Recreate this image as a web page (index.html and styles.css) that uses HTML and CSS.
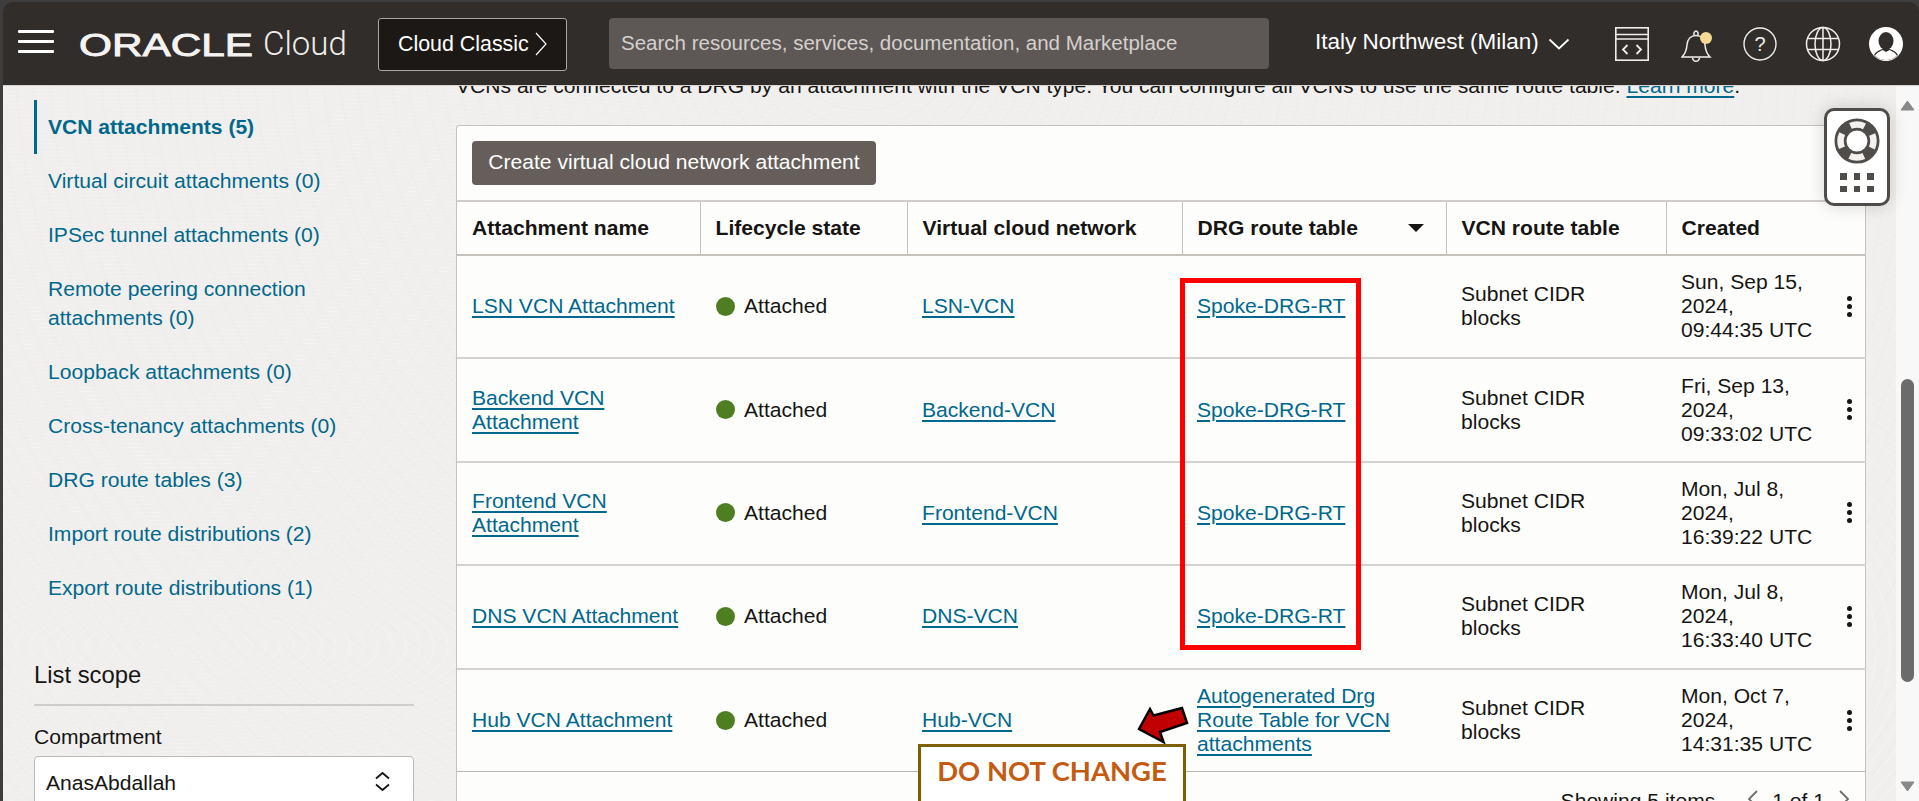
FILE: index.html
```html
<!DOCTYPE html>
<html lang="en">
<head>
<meta charset="utf-8">
<title>VCN attachments</title>
<link rel="stylesheet" href="styles.css">
</head>
<body>
<div class="app">
  <header class="topbar">
    <button class="burger" aria-label="Menu"><span></span><span></span><span></span></button>
    <div class="brand">
      <svg class="wordmark" width="174" height="24" viewBox="0 0 174 24"><text x="0" y="22.5" textLength="174" lengthAdjust="spacingAndGlyphs">ORACLE</text></svg>
      <span class="cloud">Cloud</span>
    </div>
    <button class="classic">Cloud Classic
      <svg width="14" height="28" viewBox="0 0 14 28"><path d="M2 3l10 11L2 25" fill="none" stroke="#fff" stroke-width="1.2"/></svg>
    </button>
    <div class="search">Search resources, services, documentation, and Marketplace</div>
    <div class="region">Italy Northwest (Milan)
      <svg width="22" height="12" viewBox="0 0 22 12"><path d="M1.5 1.5L11 10.5l9.5-9" fill="none" stroke="#fff" stroke-width="1.8"/></svg>
    </div>
    <div class="tools">
      <svg class="t-code" width="34" height="34" viewBox="0 0 34 34"><g fill="none" stroke="#f0efee" stroke-width="1.6"><rect x=".8" y=".8" width="32.4" height="32.4"/><path d="M1 7.5h32M1 12h32"/><path d="M12.5 18l-4.5 4.5 4.5 4.5M21.5 18l4.5 4.5-4.5 4.5" stroke-width="1.8"/></g></svg>
      <svg class="t-bell" width="32" height="36" viewBox="0 0 32 36"><g fill="none" stroke="#f0efee" stroke-width="1.5"><path d="M1 30c3-3 4.500-6 5-12 .4-6 4-9.500 9-9.500s8.600 3.500 9 9.500c.5 6 2 9 5 12z"/><path d="M13 8.500c-1-6 5-6 4 0"/><path d="M11.500 30.500c.5 5 6.500 5 7 0"/></g><circle cx="25" cy="11" r="6" fill="#f6d992"/></svg>
      <svg class="t-help" width="34" height="34" viewBox="0 0 34 34"><circle cx="17" cy="17" r="16" fill="none" stroke="#f0efee" stroke-width="1.4"/><text x="17" y="24" text-anchor="middle" class="qmark">?</text></svg>
      <svg class="t-globe" width="36" height="36" viewBox="0 0 36 36"><g fill="none" stroke="#f0efee" stroke-width="1.5"><circle cx="18" cy="18" r="16.500"/><ellipse cx="18" cy="18" rx="8" ry="16.500"/><path d="M18 1.500v33M2.500 12.500h31M2.500 23.500h31"/></g></svg>
      <svg class="t-user" width="34" height="34" viewBox="0 0 34 34"><circle cx="17" cy="17" r="17" fill="#fff"/><ellipse cx="17" cy="14" rx="7.500" ry="9" fill="#312d2a"/><path d="M5 28c3-5 7-5 8-6h8c1 1 5 1 8 6-3 3.500-7.500 5-12 5s-9-1.500-12-5z" fill="#312d2a"/><path d="M6 28.500c3-4 6-4.500 7.500-5.500l3.500 2 3.500-2c1.500 1 4.500 1.500 7.500 5.500-3 3-7 4.500-11 4.500s-8-1.500-11-4.500z" fill="#fff"/></svg>
    </div>
  </header>

  <div class="stage">
    <div class="content">
      <aside class="sidebar">
        <nav class="nav">
          <a class="nav-item active">VCN attachments (5)</a>
          <a class="nav-item">Virtual circuit attachments (0)</a>
          <a class="nav-item">IPSec tunnel attachments (0)</a>
          <a class="nav-item">Remote peering connection attachments (0)</a>
          <a class="nav-item">Loopback attachments (0)</a>
          <a class="nav-item">Cross-tenancy attachments (0)</a>
          <a class="nav-item">DRG route tables (3)</a>
          <a class="nav-item">Import route distributions (2)</a>
          <a class="nav-item">Export route distributions (1)</a>
        </nav>
        <h2 class="scope-title">List scope</h2>
        <label class="field-label">Compartment</label>
        <div class="select">AnasAbdallah
          <svg width="17" height="21" viewBox="0 0 17 21"><path d="M2 7.500L8.500 2 15 7.500M2 13.500L8.500 19 15 13.500" fill="none" stroke="#161513" stroke-width="1.800"/></svg>
        </div>
      </aside>

      <main class="main">
        <p class="intro">VCNs are connected to a DRG by an attachment with the VCN type. You can configure all VCNs to use the same route table. <a class="link">Learn more</a>.</p>
        <section class="card">
          <div class="toolbar"><button class="primary">Create virtual cloud network attachment</button></div>
          <table class="grid">
            <colgroup>
              <col class="c1"><col class="c2"><col class="c3"><col class="c4"><col class="c5"><col class="c6">
            </colgroup>
            <thead>
              <tr>
                <th>Attachment name</th>
                <th>Lifecycle state</th>
                <th>Virtual cloud network</th>
                <th><div class="sort">DRG route table<span class="caret"></span></div></th>
                <th>VCN route table</th>
                <th>Created</th>
              </tr>
            </thead>
            <tbody>
              <tr>
                <td><a class="link">LSN VCN Attachment</a></td>
                <td class="status"><div class="state"><i class="dot"></i>Attached</div></td>
                <td><a class="link">LSN-VCN</a></td>
                <td><a class="link">Spoke-DRG-RT</a></td>
                <td class="cidr">Subnet CIDR blocks</td>
                <td class="created"><div class="when"><span>Sun, Sep 15, 2024, 09:44:35 UTC</span><div class="kebab"><i></i><i></i><i></i></div></div></td>
              </tr>
              <tr>
                <td><a class="link">Backend VCN Attachment</a></td>
                <td class="status"><div class="state"><i class="dot"></i>Attached</div></td>
                <td><a class="link">Backend-VCN</a></td>
                <td><a class="link">Spoke-DRG-RT</a></td>
                <td class="cidr">Subnet CIDR blocks</td>
                <td class="created"><div class="when"><span>Fri, Sep 13, 2024, 09:33:02 UTC</span><div class="kebab"><i></i><i></i><i></i></div></div></td>
              </tr>
              <tr>
                <td><a class="link">Frontend VCN Attachment</a></td>
                <td class="status"><div class="state"><i class="dot"></i>Attached</div></td>
                <td><a class="link">Frontend-VCN</a></td>
                <td><a class="link">Spoke-DRG-RT</a></td>
                <td class="cidr">Subnet CIDR blocks</td>
                <td class="created"><div class="when"><span>Mon, Jul 8, 2024, 16:39:22 UTC</span><div class="kebab"><i></i><i></i><i></i></div></div></td>
              </tr>
              <tr>
                <td><a class="link">DNS VCN Attachment</a></td>
                <td class="status"><div class="state"><i class="dot"></i>Attached</div></td>
                <td><a class="link">DNS-VCN</a></td>
                <td><a class="link">Spoke-DRG-RT</a></td>
                <td class="cidr">Subnet CIDR blocks</td>
                <td class="created"><div class="when"><span>Mon, Jul 8, 2024, 16:33:40 UTC</span><div class="kebab"><i></i><i></i><i></i></div></div></td>
              </tr>
              <tr>
                <td><a class="link">Hub VCN Attachment</a></td>
                <td class="status"><div class="state"><i class="dot"></i>Attached</div></td>
                <td><a class="link">Hub-VCN</a></td>
                <td><a class="link">Autogenerated Drg Route Table for VCN attachments</a></td>
                <td class="cidr">Subnet CIDR blocks</td>
                <td class="created"><div class="when"><span>Mon, Oct 7, 2024, 14:31:35 UTC</span><div class="kebab"><i></i><i></i><i></i></div></div></td>
              </tr>
            </tbody>
          </table>
          <div class="pager">
            <span class="count">Showing 5 items</span>
            <svg width="12" height="20" viewBox="0 0 12 20"><path d="M10 2L2 10l8 8" fill="none" stroke="#6f6b68" stroke-width="1.800"/></svg>
            <span>1 of 1</span>
            <svg width="12" height="20" viewBox="0 0 12 20"><path d="M2 2l8 8-8 8" fill="none" stroke="#6f6b68" stroke-width="1.800"/></svg>
          </div>
        </section>
      </main>
    </div>

    <div class="scrollbar">
      <svg class="arrow-up" width="15" height="11" viewBox="0 0 15 11"><path d="M7.500 1L14 10H1z" fill="#8a8886" stroke="#8a8886" stroke-linejoin="round"/></svg>
      <div class="thumb"></div>
      <svg class="arrow-down" width="15" height="11" viewBox="0 0 15 11"><path d="M7.500 10L14 1H1z" fill="#8a8886" stroke="#8a8886" stroke-linejoin="round"/></svg>
    </div>
  </div>

  <aside class="help-widget">
    <svg width="46" height="46" viewBox="0 0 46 46"><circle cx="23" cy="23" r="16.500" fill="none" stroke="#504c49" stroke-width="12"/><circle cx="23" cy="23" r="16.500" fill="none" stroke="#f2f1f0" stroke-width="6.500" stroke-dasharray="14.500 11.420" stroke-dashoffset="7.250"/></svg>
    <div class="waffle"><i></i><i></i><i></i><i></i><i></i><i></i></div>
  </aside>

  <div class="redbox"></div>
  <svg class="callout-arrow" width="52" height="38" viewBox="0 0 52 38"><path d="M2 23L13 3l3.500 6.500L45 2l5 15-27 9 3.500 10z" fill="#c00000" stroke="#000" stroke-width="2.500" stroke-linejoin="miter"/></svg>
  <div class="callout">DO NOT CHANGE</div>
</div>
</body>
</html>
```

FILE: styles.css
```css
* { box-sizing: border-box; }
html, body { margin: 0; height: 100%; }
body {
  background: #3d3d3d;
  font-family: "Liberation Sans", Arial, sans-serif;
  font-size: 21.08px;
  line-height: 24px;
  color: #161513;
  overflow: hidden;
}
button { font: inherit; cursor: pointer; }

.app {
  position: relative;
  width: 1919px;
  height: 801px;
  padding: 2px 0 0 3px;
  display: flex;
  flex-direction: column;
  overflow: hidden;
}

/* top bar */
.topbar {
  flex: none;
  height: 84px;
  padding-right: 16px;
  background: #312d2a;
  border-radius: 10px 10px 0 0;
  border-bottom: 1px solid #d6d3d0;
  display: flex;
  align-items: center;
  color: #fff;
}
.burger {
  flex: none;
  width: 36px;
  height: 23px;
  margin: -4px 0 0 15px;
  padding: 0;
  background: none;
  border: 0;
  display: flex;
  flex-direction: column;
  justify-content: space-between;
}
.burger span { display: block; height: 3px; background: #fff; border-radius: 1px; }
.brand { flex: none; width: 266px; margin-left: 25px; display: flex; align-items: center; gap: 10px; }
.wordmark { display: block; margin-top: 2px; overflow: visible; }
.wordmark text {
  font-family: "Liberation Sans", sans-serif;
  font-size: 31px;
  font-weight: 400;
  fill: #f4f3f2;
  stroke: #f4f3f2;
  stroke-width: .9px;
}
.cloud { font-family: Roboto, sans-serif; font-weight: 300; font-size: 33px; line-height: 36px; color: #eeedec; }
.classic {
  flex: none;
  margin: 1px 0 0 33px;
  width: 189px;
  height: 53px;
  background: #1c1815;
  border: 1px solid #a9a6a3;
  border-radius: 3px;
  color: #fff;
  font-size: 21.4px;
  padding: 0 0 0 19px;
  display: flex;
  align-items: center;
  gap: 5px;
}
.search {
  flex: none;
  margin: -1px 0 0 42px;
  width: 660px;
  height: 51px;
  background: #5d5855;
  border-radius: 4px;
  padding-left: 12px;
  display: flex;
  align-items: center;
  font-size: 20.53px;
  color: #d4d0cd;
}
.region {
  flex: none;
  margin: -4px 0 0 46px;
  font-size: 22.5px;
  display: flex;
  align-items: center;
  gap: 9px;
  white-space: nowrap;
}
.region svg { margin-top: 5px; }
.tools { margin-left: auto; display: flex; align-items: center; }
.t-bell { margin-left: 32px; margin-top: 2px; }
.t-help { margin-left: 30px; }
.t-globe { margin-left: 28px; margin-top: 1px; }
.t-user { margin-left: 28px; }
.qmark { font-family: "Liberation Sans", sans-serif; font-size: 20px; fill: #f0efee; }

/* stage */
.stage { flex: 1; min-height: 0; display: flex; overflow: hidden; }
.content {
  flex: 1;
  min-width: 0;
  display: flex;
  background-color: #f1efed;
  background-image:
    repeating-radial-gradient(ellipse 130% 100% at 180px 560px, rgba(255,255,255,0) 0 12px, rgba(255,255,255,.16) 12px 14px),
    repeating-radial-gradient(circle at 860px -60px, rgba(0,0,0,0) 0 15px, rgba(0,0,0,.006) 15px 17px);
}
.sidebar { flex: none; width: 453px; padding: 14px 0 0 31px; }
.nav { width: 380px; display: flex; flex-direction: column; }
.nav-item {
  display: block;
  padding: 11.8px 30px 12.8px 14px;
  line-height: 29.4px;
  color: #00688c;
}
.nav-item.active { font-weight: 700; border-left: 3px solid #00688c; padding-left: 11px; }
.scope-title {
  width: 380px;
  margin: 45px 0 0;
  padding-bottom: 14px;
  border-bottom: 2px solid #cfccc9;
  font-size: 23.8px;
  font-weight: 400;
  line-height: 30px;
}
.field-label { display: block; margin-top: 19px; }
.select {
  width: 380px;
  height: 56px;
  margin-top: 7px;
  background: #fff;
  border: 1px solid #bdb9b5;
  border-radius: 4px;
  padding: 14px 22px 0 11px;
  display: flex;
  justify-content: space-between;
  align-items: flex-start;
}
.main { flex: none; width: 1410px; }
.intro { margin: -12px 0 27px; white-space: nowrap; }
.link { color: #00688c; text-decoration: underline; text-decoration-thickness: 1.5px; text-underline-offset: 3px; }

.card {
  background: #fdfdfc;
  border: 1px solid #c6c2be;
  border-bottom: 0;
  border-radius: 3px 3px 0 0;
}
.toolbar { height: 74px; padding: 15px 15px 0; }
.primary {
  width: 404px;
  height: 44px;
  background: #665e5a;
  border: 0;
  border-radius: 4px;
  color: #fff;
  padding: 0 0 2px;
}

.grid { width: 1409px; table-layout: fixed; border-collapse: collapse; }
.c1 { width: 243px; }
.c2 { width: 207px; }
.c3 { width: 275px; }
.c4 { width: 264px; }
.c5 { width: 220px; }
.c6 { width: 200px; }
.grid th {
  height: 54px;
  padding: 0 15px 1px;
  text-align: left;
  font-weight: 700;
  border-top: 2px solid #d0ccc9;
  border-bottom: 2px solid #c6c2be;
  border-left: 1px solid #c6c2be;
}
.grid th:first-child { border-left: 0; }
.grid td {
  height: 103.4px;
  padding: 0 15px 1px;
  vertical-align: middle;
  border-bottom: 2px solid #d5d1cf;
}
.grid tbody tr:last-child td { border-bottom: 1px solid #bcb8b4; }
.sort { display: flex; align-items: center; justify-content: space-between; padding-right: 7px; }
.caret { width: 0; height: 0; border-left: 8px solid transparent; border-right: 8px solid transparent; border-top: 8px solid #161513; }
.grid .status { padding-left: 16px; }
.state { display: flex; align-items: center; gap: 9px; }
.dot { width: 19px; height: 19px; border-radius: 50%; background: #4f7d21; }
.grid .cidr { padding-right: 40px; }
.grid .created { padding-right: 14px; }
.when { display: flex; align-items: center; justify-content: space-between; }
.when span { width: 134px; }
.kebab { display: flex; flex-direction: column; gap: 3px; }
.kebab i { width: 5px; height: 5px; border-radius: 50%; background: #161513; }

.pager {
  display: flex;
  justify-content: flex-end;
  gap: 13px;
  padding: 17px 15px 0 0;
  height: 60px;
  align-items: flex-start;
}
.count { margin-right: 19px; }

/* scrollbar */
.scrollbar {
  flex: none;
  width: 23px;
  background: #f8f8f8;
  display: flex;
  flex-direction: column;
  align-items: center;
  padding-top: 14px;
}
.arrow-up { flex: none; }
.thumb { flex: none; width: 13px; height: 303px; margin-top: 268px; background: #6b6b6b; border-radius: 7px; }
.arrow-down { flex: none; margin-top: 99px; }

/* overlays */
.help-widget {
  position: absolute;
  left: 1824px;
  top: 108px;
  width: 66px;
  height: 98px;
  background: #fff;
  border: 3px solid #4f4b48;
  border-radius: 10px;
  box-shadow: 0 0 18px rgba(0,0,0,.16);
  display: flex;
  flex-direction: column;
  align-items: center;
  padding-top: 7px;
}
.waffle { display: grid; grid-template-columns: repeat(3, 6.500px); gap: 6px 7px; margin-top: 9px; }
.waffle i { width: 6.500px; height: 6.500px; background: #504c49; }
.redbox {
  position: absolute;
  left: 1180px;
  top: 278px;
  width: 181px;
  height: 372px;
  border: 5px solid #ff0000;
}
.callout-arrow { position: absolute; left: 1137px; top: 706px; }
.callout {
  position: absolute;
  left: 918px;
  top: 744px;
  width: 268px;
  height: 80px;
  background: #fff;
  border: 3px solid #7f6000;
  padding-top: 7px;
  text-align: center;
  font-family: Lato, sans-serif;
  font-weight: 700;
  font-size: 27.4px;
  line-height: 34px;
  color: #c55a11;
}
```
